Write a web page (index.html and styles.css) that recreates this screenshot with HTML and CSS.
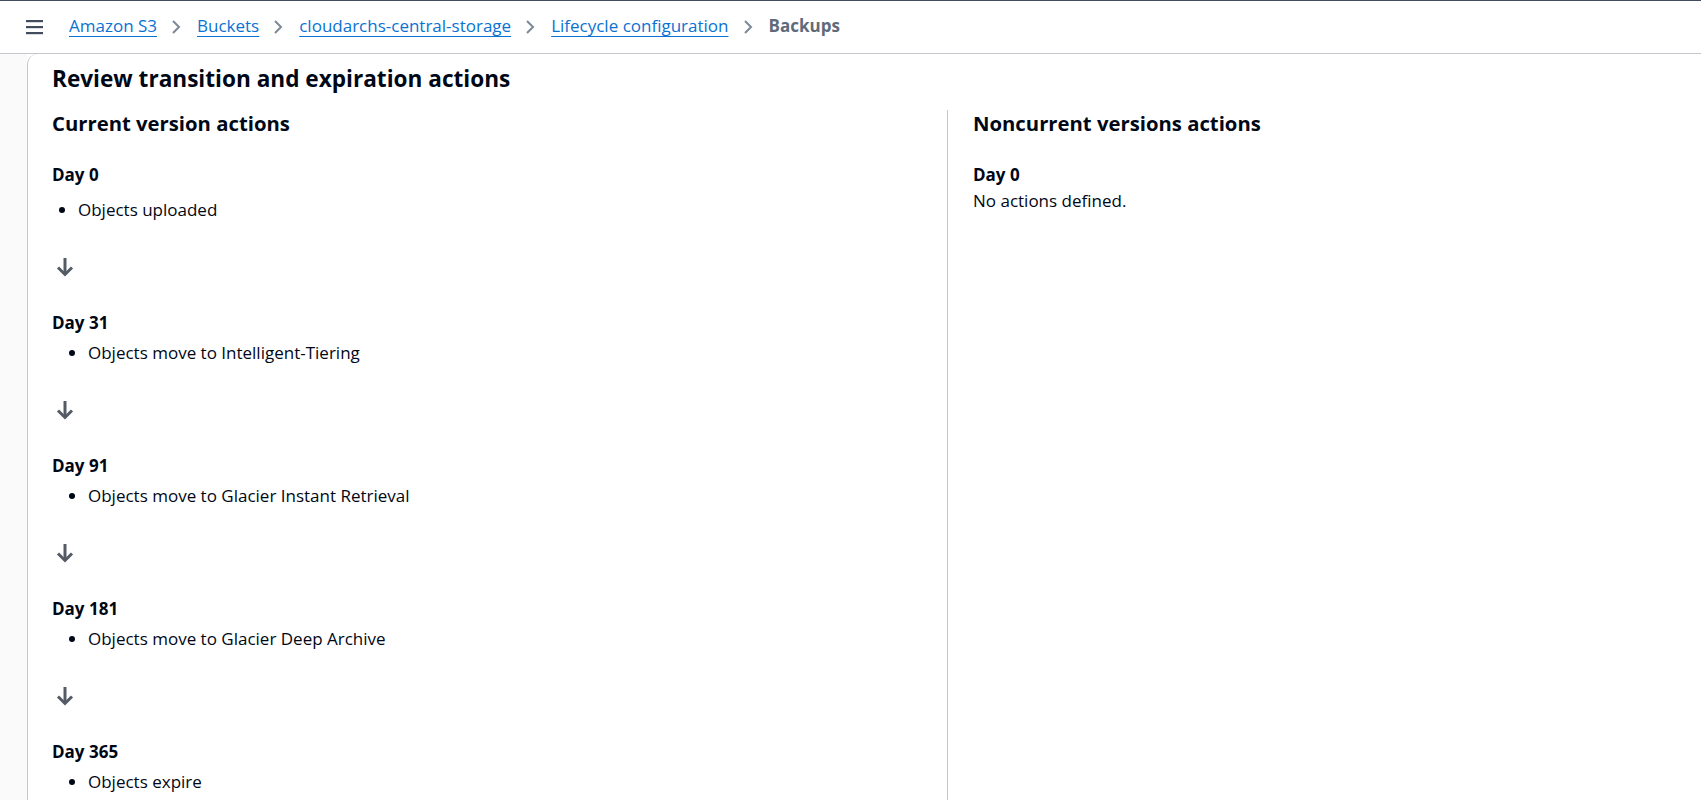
FILE: index.html
```html
<!DOCTYPE html>
<html lang="en">
<head>
<meta charset="utf-8">
<title>Backups - Lifecycle configuration</title>
<link rel="stylesheet" href="styles.css">
</head>
<body>
<header class="topbar">
  <button class="menu" aria-label="Open navigation">
    <svg width="18" height="16" viewBox="0 0 18 16"><rect x="0" y="1" width="17" height="2.2" fill="#414d5c"/><rect x="0" y="7" width="17" height="2.2" fill="#414d5c"/><rect x="0" y="13" width="17" height="2.2" fill="#414d5c"/></svg>
  </button>
  <nav class="crumbs">
    <a href="#">Amazon S3</a>
    <svg class="chev" width="10" height="16" viewBox="0 0 10 16"><polyline points="2,2 8,8 2,14" fill="none" stroke="#7d8998" stroke-width="2"/></svg>
    <a href="#">Buckets</a>
    <svg class="chev" width="10" height="16" viewBox="0 0 10 16"><polyline points="2,2 8,8 2,14" fill="none" stroke="#7d8998" stroke-width="2"/></svg>
    <a href="#">cloudarchs-central-storage</a>
    <svg class="chev" width="10" height="16" viewBox="0 0 10 16"><polyline points="2,2 8,8 2,14" fill="none" stroke="#7d8998" stroke-width="2"/></svg>
    <a href="#">Lifecycle configuration</a>
    <svg class="chev" width="10" height="16" viewBox="0 0 10 16"><polyline points="2,2 8,8 2,14" fill="none" stroke="#7d8998" stroke-width="2"/></svg>
    <span class="current">Backups</span>
  </nav>
</header>
<div class="layout">
  <aside class="gutter"></aside>
  <main class="panel">
    <h2 class="title">Review transition and expiration actions</h2>
    <div class="cols">
      <section class="col col-left">
        <h3 class="subtitle">Current version actions</h3>
        <div class="step first">
          <div class="day">Day 0</div>
          <ul class="acts acts-first"><li>Objects uploaded</li></ul>
        </div>
        <div class="arrow"><svg width="18" height="20" viewBox="0 0 18 20"><line x1="9" y1="1" x2="9" y2="17" stroke="#545b64" stroke-width="3"/><polyline points="2,10.5 9,17.5 16,10.5" fill="none" stroke="#545b64" stroke-width="3"/></svg></div>
        <div class="step">
          <div class="day">Day 31</div>
          <ul class="acts"><li>Objects move to Intelligent-Tiering</li></ul>
        </div>
        <div class="arrow"><svg width="18" height="20" viewBox="0 0 18 20"><line x1="9" y1="1" x2="9" y2="17" stroke="#545b64" stroke-width="3"/><polyline points="2,10.5 9,17.5 16,10.5" fill="none" stroke="#545b64" stroke-width="3"/></svg></div>
        <div class="step">
          <div class="day">Day 91</div>
          <ul class="acts"><li>Objects move to Glacier Instant Retrieval</li></ul>
        </div>
        <div class="arrow"><svg width="18" height="20" viewBox="0 0 18 20"><line x1="9" y1="1" x2="9" y2="17" stroke="#545b64" stroke-width="3"/><polyline points="2,10.5 9,17.5 16,10.5" fill="none" stroke="#545b64" stroke-width="3"/></svg></div>
        <div class="step">
          <div class="day">Day 181</div>
          <ul class="acts"><li>Objects move to Glacier Deep Archive</li></ul>
        </div>
        <div class="arrow"><svg width="18" height="20" viewBox="0 0 18 20"><line x1="9" y1="1" x2="9" y2="17" stroke="#545b64" stroke-width="3"/><polyline points="2,10.5 9,17.5 16,10.5" fill="none" stroke="#545b64" stroke-width="3"/></svg></div>
        <div class="step">
          <div class="day">Day 365</div>
          <ul class="acts"><li>Objects expire</li></ul>
        </div>
      </section>
      <section class="col col-right">
        <h3 class="subtitle">Noncurrent versions actions</h3>
        <div class="step first">
          <div class="day">Day 0</div>
          <div class="none">No actions defined.</div>
        </div>
      </section>
    </div>
  </main>
</div>
</body>
</html>
```
FILE: styles.css
```css
* { box-sizing: border-box; }
html, body { margin: 0; padding: 0; }
body {
  font-family: "Open Sans", "Noto Sans", sans-serif;
  font-size: 17px;
  line-height: 22px;
  color: #000716;
  background: #ffffff;
  overflow: hidden;
  height: 800px;
}
.topbar {
  height: 54px;
  border-top: 1px solid #414d5c;
  border-bottom: 1px solid #c6c6cd;
  display: flex;
  align-items: center;
  padding-left: 26px;
  padding-bottom: 2px;
}
.menu {
  border: 0;
  background: none;
  padding: 0;
  width: 18px;
  height: 16px;
  margin-top: 2px;
  display: flex;
}
.crumbs {
  display: flex;
  align-items: center;
  margin-left: 25px;
}
.crumbs a {
  color: #0972d3;
  text-decoration: underline;
  text-underline-offset: 4px;
  text-decoration-thickness: 1px;
}
.chev {
  display: block;
  margin: 1px 16px 0 14px;
}
.current {
  color: #5f6b7a;
  font-weight: 700;
}
.layout {
  display: flex;
  height: 746px;
}
.gutter {
  width: 27px;
  background: #fafafa;
  flex: none;
}
.panel {
  flex: 1;
  display: flex;
  flex-direction: column;
  border-left: 1px solid #c6c6cd;
  border-top-left-radius: 10px;
  padding: 11px 0 0 24px;
}
.title {
  margin: 0;
  font-size: 22.6px;
  line-height: 28px;
  font-weight: 700;
}
.cols {
  flex: 1;
  display: grid;
  grid-template-columns: 895px 1fr;
  margin-top: 17px;
}
.col-right {
  border-left: 1px solid #c6c6cd;
  padding-left: 25px;
}
.subtitle {
  margin: 0;
  font-size: 20.3px;
  line-height: 26px;
  font-weight: 700;
}
.step.first { margin-top: 28px; }
.day {
  font-weight: 700;
  line-height: 22px;
}
.acts {
  margin: 8px 0 0 0;
  padding-left: 36px;
  list-style: disc;
}
.acts-first {
  margin-top: 13px;
  padding-left: 26px;
  margin-bottom: 15px;
}
.acts li { line-height: 22px; }
.none { margin-top: 4px; }
.arrow {
  height: 20px;
  margin: 36px 0 35px 4px;
}
.arrow svg { display: block; }
```
